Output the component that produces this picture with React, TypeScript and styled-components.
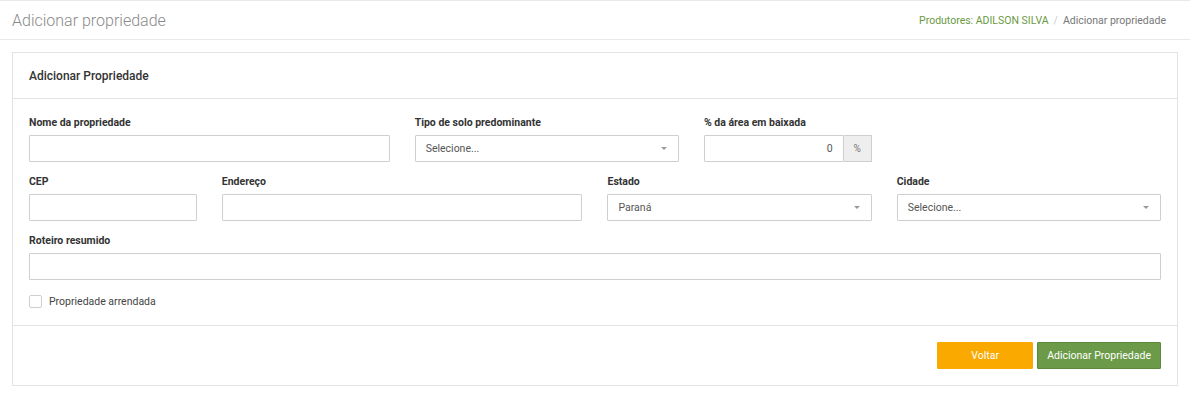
import styled, { createGlobalStyle } from 'styled-components'

const GlobalStyle = createGlobalStyle`
  html, body {
    margin: 0;
    padding: 0;
    background: #fff;
    font-family: Roboto, 'Liberation Sans', Arial, sans-serif;
    color: #333;
  }
  * { box-sizing: border-box; }
`

const PageHeader = styled.header`
  height: 40px;
  display: flex;
  align-items: center;
  justify-content: space-between;
  padding: 0 24px 0 12px;
  border-top: 1px solid #e8e8e8;
  border-bottom: 1px solid #e8e8e8;
`

const PageTitle = styled.h1`
  margin: 0;
  font-size: 16px;
  font-weight: 300;
  color: #8a8a8a;
`

const Breadcrumb = styled.nav`
  display: flex;
  align-items: center;
  gap: 5px;
  font-size: 10.5px;
  color: #777;
`

const Crumb = styled.span<{ $link?: boolean }>`
  color: ${(p) => (p.$link ? '#6a9a3f' : '#777')};
`

const Sep = styled.span`
  color: #ccc;
`

const Content = styled.main`
  padding: 12px 12px 0;
`

const Card = styled.section`
  border: 1px solid #e3e3e3;
  background: #fff;
`

const CardHeader = styled.div`
  height: 46px;
  display: flex;
  align-items: center;
  padding: 0 16px;
  border-bottom: 1px solid #e3e3e3;
`

const CardTitle = styled.h2`
  margin: 0;
  font-size: 12px;
  font-weight: 500;
  color: #333;
`

const CardBody = styled.div`
  padding: 16px 16px 17px;
`

const Grid = styled.div`
  display: grid;
  grid-template-columns: repeat(12, 1fr);
  column-gap: 25px;
`

const Field = styled.div<{ $span: number }>`
  grid-column: span ${(p) => p.$span};
  margin-bottom: 12px;
`

const Label = styled.label`
  display: block;
  font-size: 10.5px;
  font-weight: 700;
  line-height: 16px;
  color: #333;
  margin-bottom: 4px;
`

const Input = styled.input<{ $right?: boolean }>`
  display: block;
  width: 100%;
  height: 27px;
  border: 1px solid #cfcfcf;
  border-radius: 1px;
  padding: 0 10px;
  font-family: inherit;
  font-size: 10.5px;
  color: #555;
  text-align: ${(p) => (p.$right ? 'right' : 'left')};
  background: #fff;
  outline: none;
`

const InputGroup = styled.div`
  display: flex;
`

const Addon = styled.span`
  width: 28px;
  flex: none;
  height: 27px;
  display: flex;
  align-items: center;
  justify-content: center;
  font-size: 10px;
  color: #777;
  background: #eee;
  border: 1px solid #cfcfcf;
  border-left: none;
`

const Select = styled.div`
  height: 27px;
  display: flex;
  align-items: center;
  justify-content: space-between;
  border: 1px solid #cfcfcf;
  border-radius: 1px;
  padding: 0 10px;
  font-size: 10.5px;
  color: #555;
`

const Caret = styled.span`
  width: 0;
  height: 0;
  border-left: 3px solid transparent;
  border-right: 3px solid transparent;
  border-top: 3px solid #999;
  margin-right: 1px;
`

const CheckRow = styled.label`
  display: flex;
  align-items: center;
  gap: 7px;
  font-size: 10.5px;
  color: #444;
  margin-top: 3px;
`

const Box = styled.span`
  width: 13px;
  height: 13px;
  border: 1px solid #cfcfcf;
  border-radius: 2px;
  background: #fff;
`

const CardFooter = styled.div`
  display: flex;
  justify-content: flex-end;
  gap: 4px;
  padding: 16px;
  border-top: 1px solid #e3e3e3;
`

const Button = styled.button<{ $variant: 'warning' | 'success' }>`
  height: 27px;
  padding: 0 9px;
  font-family: inherit;
  font-size: 10.5px;
  color: #fff;
  border-radius: 1px;
  cursor: pointer;
  background: ${(p) => (p.$variant === 'warning' ? '#f9a900' : '#6b9a48')};
  border: 1px solid ${(p) => (p.$variant === 'warning' ? '#f9a900' : '#5a8a3a')};
  min-width: ${(p) => (p.$variant === 'warning' ? '96px' : 'auto')};
`

function SelectBox({ value }: { value: string }) {
  return (
    <Select>
      <span>{value}</span>
      <Caret />
    </Select>
  )
}

export default function App() {
  return (
    <>
      <GlobalStyle />
      <PageHeader>
        <PageTitle>Adicionar propriedade</PageTitle>
        <Breadcrumb>
          <Crumb $link>Produtores: ADILSON SILVA</Crumb>
          <Sep>/</Sep>
          <Crumb>Adicionar propriedade</Crumb>
        </Breadcrumb>
      </PageHeader>
      <Content>
        <Card>
          <CardHeader>
            <CardTitle>Adicionar Propriedade</CardTitle>
          </CardHeader>
          <CardBody>
            <Grid>
              <Field $span={4}>
                <Label>Nome da propriedade</Label>
                <Input />
              </Field>
              <Field $span={3}>
                <Label>Tipo de solo predominante</Label>
                <SelectBox value="Selecione..." />
              </Field>
              <Field $span={2}>
                <Label>% da área em baixada</Label>
                <InputGroup>
                  <Input $right defaultValue="0" />
                  <Addon>%</Addon>
                </InputGroup>
              </Field>
              <Field $span={3} />
              <Field $span={2}>
                <Label>CEP</Label>
                <Input />
              </Field>
              <Field $span={4}>
                <Label>Endereço</Label>
                <Input />
              </Field>
              <Field $span={3}>
                <Label>Estado</Label>
                <SelectBox value="Paraná" />
              </Field>
              <Field $span={3}>
                <Label>Cidade</Label>
                <SelectBox value="Selecione..." />
              </Field>
              <Field $span={12}>
                <Label>Roteiro resumido</Label>
                <Input />
              </Field>
            </Grid>
            <CheckRow>
              <Box />
              Propriedade arrendada
            </CheckRow>
          </CardBody>
          <CardFooter>
            <Button $variant="warning">Voltar</Button>
            <Button $variant="success">Adicionar Propriedade</Button>
          </CardFooter>
        </Card>
      </Content>
    </>
  )
}
